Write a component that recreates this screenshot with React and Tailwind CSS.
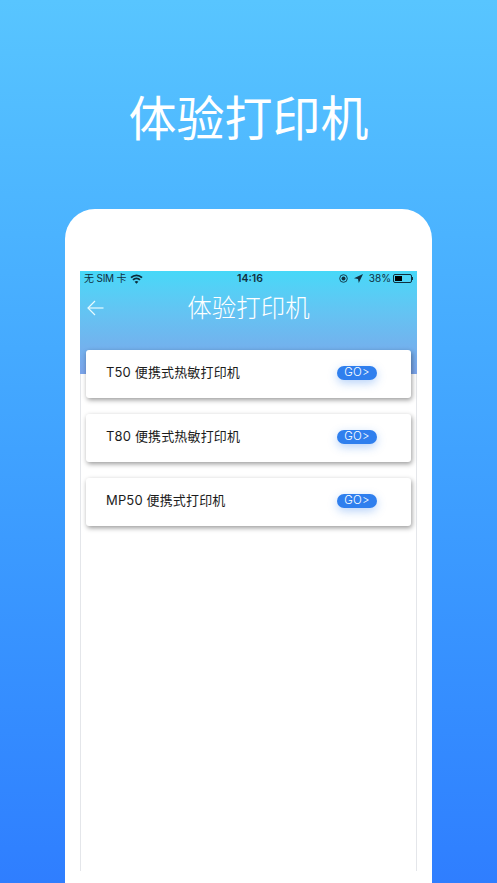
const FONT = "font-['Inter','Noto_Sans_CJK_SC',sans-serif]";

const printers = [
  { id: "t50", name: "T50 便携式热敏打印机" },
  { id: "t80", name: "T80 便携式热敏打印机" },
  { id: "mp50", name: "MP50 便携式打印机" },
];

const WifiIcon = () => (
  <svg width="13" height="10" viewBox="0 0 13 10" fill="none" stroke="#0c2a38" strokeWidth="1.9">
    <path d="M1 3.6C4.2.6 8.8.6 12 3.6" />
    <path d="M3 5.9c2-1.8 5-1.8 7 0" />
    <path d="M6.5 9.8 4.6 7.7c1-.9 2.8-.9 3.8 0z" fill="#0c2a38" stroke="none" />
  </svg>
);

const LockIcon = () => (
  <svg width="9" height="9" viewBox="0 0 9 9" fill="none">
    <circle cx="4.5" cy="4.5" r="3.8" stroke="#10303f" strokeWidth="0.9" />
    <circle cx="4.5" cy="4.5" r="2" fill="#10303f" />
  </svg>
);

const LocationIcon = () => (
  <svg width="9" height="9" viewBox="0 0 9 9">
    <path d="M9 0 0 4.2l4 .8.8 4z" fill="#10303f" />
  </svg>
);

const BatteryIcon = () => (
  <div className="flex items-center">
    <div className="w-[19px] h-[9px] border border-[#10303f] rounded-[2px] p-px">
      <div className="w-[7px] h-full bg-black" />
    </div>
    <div className="w-px h-[3px] bg-[#10303f]" />
  </div>
);

const BackIcon = () => (
  <svg width="17" height="16" viewBox="0 0 17 16" fill="none" stroke="#e8fbff" strokeWidth="1.2">
    <path d="M16.5 8H1" />
    <path d="M8 1 1 8l7 7" />
  </svg>
);

const PrinterCard = ({ name }) => (
  <div className="h-[48px] flex items-center justify-between pl-[20px] pr-[34px] pb-[2px] bg-white rounded-[3px] shadow-[1px_2px_5px_rgba(0,0,0,0.4)]">
    <span className="text-[13px] tracking-[0.15px] text-[#1c1c1c]">{name}</span>
    <span className="w-[40px] h-[14px] flex items-center justify-center rounded-full bg-[#2f7fee] text-white text-[11.5px] tracking-[0.2px] font-light shadow-[0_3px_10px_rgba(47,127,238,0.35)]">
      GO&gt;
    </span>
  </div>
);

export default function App() {
  return (
    <div className={`${FONT} w-[497px] h-[883px] overflow-hidden flex flex-col items-center bg-gradient-to-b from-[#58c5ff] to-[#2f7eff]`}>
      <h1 className="mt-[85px] h-[68px] leading-[68px] text-[48px] text-white font-normal">体验打印机</h1>

      <div className="mt-[56px] w-[367px] flex-1 px-[15px] pt-[62px] bg-white rounded-t-[30px]">
        <div className="h-[600px] border-x border-[#e4e6ea]">
          <div className="-mx-px h-[103px] px-[4px] bg-gradient-to-b from-[#46d8f8] to-[#7ba4ea]">
            <div className="h-[15px] grid grid-cols-[1fr_auto_1fr] items-center text-[10px] text-[#10303f]">
              <div className="flex items-center gap-[4px]">
                <span className="tracking-[-0.2px]">无 SIM 卡</span>
                <WifiIcon />
              </div>
              <span className="pl-[3px] text-[10.5px] font-semibold">14:16</span>
              <div className="flex items-center justify-end gap-[6px]">
                <LockIcon />
                <LocationIcon />
                <div className="flex items-center gap-[2px]">
                  <span>38%</span>
                  <BatteryIcon />
                </div>
              </div>
            </div>
            <div className="relative h-[44px] flex items-center justify-center">
              <div className="absolute left-[3px] top-[14px]">
                <BackIcon />
              </div>
              <span className="text-[24.5px] text-white font-light">体验打印机</span>
            </div>
          </div>

          <div className="-mt-[24px] px-[5px] flex flex-col gap-[16px]">
            {printers.map((p) => (
              <PrinterCard key={p.id} name={p.name} />
            ))}
          </div>
        </div>
      </div>
    </div>
  );
}
